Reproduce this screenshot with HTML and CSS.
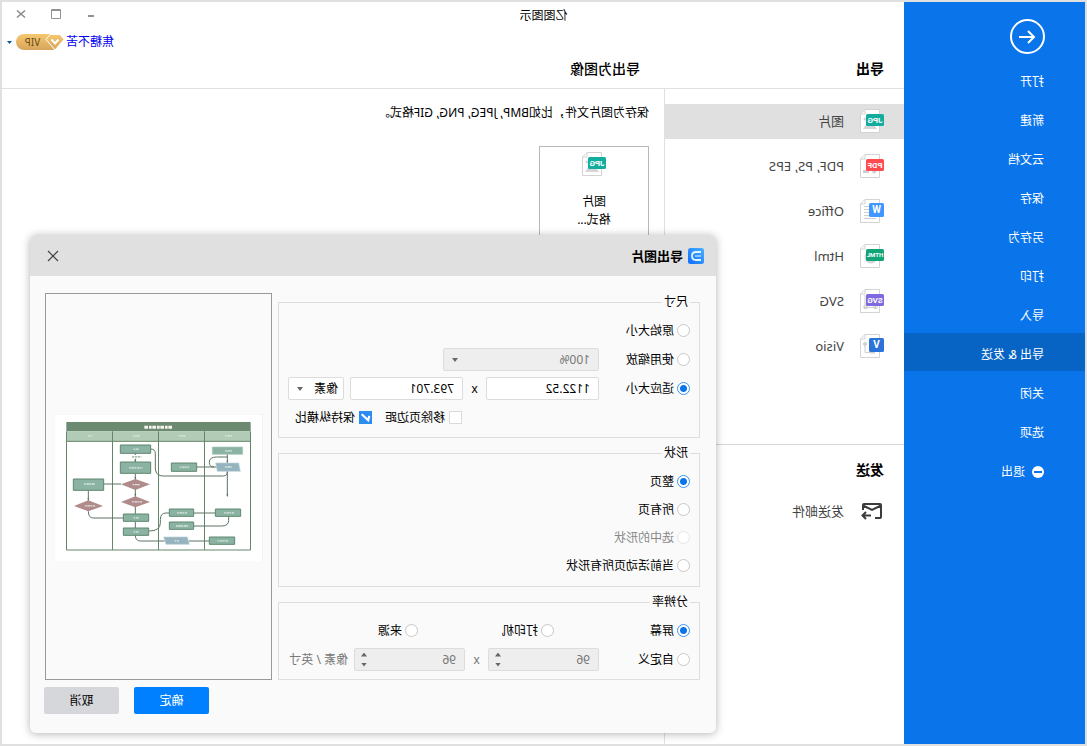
FILE: index.html
```html
<!DOCTYPE html>
<html lang="zh-CN">
<head>
<meta charset="utf-8">
<title>亿图图示</title>
<link rel="stylesheet" href="styles.css">
</head>
<body>
<svg class="defs" aria-hidden="true">
  <symbol id="doc" viewBox="0 0 24 24">
    <path d="M4.500.5H19L23.500 5V23.500H4.500Z" fill="#fff" stroke="#d3d3d3"/>
    <path d="M19 .5V5H23.500" fill="none" stroke="#d3d3d3"/>
  </symbol>
  <symbol id="photo" viewBox="0 0 24 24">
    <use href="#doc"/>
    <path d="M7 20L12 13L15 16L17 14L21 20Z" fill="#d6d6d6"/><circle cx="19" cy="10" r="1.500" fill="#d6d6d6"/>
    <rect y="5" width="18" height="12" rx="1.500" fill="#13ada0"/>
  </symbol>
</svg>
<div class="window">
  <nav class="sidebar">
    <button class="back" aria-label="返回">
      <svg width="35" height="35" viewBox="0 0 35 35" fill="none" stroke="#fff" stroke-width="2"><circle cx="17.500" cy="17.500" r="16.500"/><path d="M26 18H11M17 12L11 18L17 24"/></svg>
    </button>
    <a class="nav" href="#">打开</a>
    <a class="nav" href="#">新建</a>
    <a class="nav" href="#">云文档</a>
    <a class="nav" href="#">保存</a>
    <a class="nav" href="#">另存为</a>
    <a class="nav" href="#">打印</a>
    <a class="nav" href="#">导入</a>
    <a class="nav nav-active" href="#">导出 &amp; 发送</a>
    <a class="nav" href="#">关闭</a>
    <a class="nav" href="#">选项</a>
    <a class="nav" href="#"><svg width="12" height="12" viewBox="0 0 12 12"><circle cx="6" cy="6" r="6" fill="#fff"/><path d="M2 6H10" stroke="#0a75eb" stroke-width="2"/></svg>退出</a>
  </nav>

  <div class="workspace">
    <header class="top">
      <div class="titlebar">
        <h1 class="app-title">亿图图示</h1>
        <div class="controls">
          <button class="ctl" aria-label="最小化"><svg width="10" height="10"><rect x="2" y="6" width="6" height="2" fill="#929292"/></svg></button>
          <button class="ctl" aria-label="最大化"><svg width="10" height="10"><path d="M.5 .5H9.500V9.500H.5ZM1 1.500H9" fill="none" stroke="#929292"/></svg></button>
          <button class="ctl" aria-label="关闭窗口"><svg width="10" height="10"><path d="M1 1.500L9 8.500M9 1.500L1 8.500" stroke="#888" stroke-width="1.500"/></svg></button>
        </div>
      </div>
      <div class="account">
        <a class="user" href="#">焦糖不苦</a>
        <svg class="vip" width="48" height="16" viewBox="0 0 48 16">
          <defs><linearGradient id="gold" x2="0" y2="1"><stop stop-color="#f5c86e"/><stop offset="1" stop-color="#d7a55d"/></linearGradient></defs>
          <path d="M10 0H40A8 8 0 0 1 40 16H10Z" fill="url(#gold)"/>
          <path d="M4 .5H14L18 5.500L9 16L0 5.500Z" fill="url(#gold)" stroke="#fff"/>
          <path d="M5.500 5.500L9 9.500L12.500 5.500" fill="none" stroke="#fff" stroke-width="2"/>
          <text x="31.500" y="12" class="vip-text">VIP</text>
        </svg>
        <svg width="5" height="3"><path d="M0 0H5L2.500 3Z" fill="#0b55a8"/></svg>
      </div>
      <div class="headings">
        <h2 class="heading heading-nav">导出</h2>
        <h2 class="heading heading-page">导出为图像</h2>
      </div>
    </header>

    <div class="columns">
      <section class="formats">
        <ul class="list">
          <li class="format format-active"><svg class="icon" viewBox="0 0 24 24"><use href="#photo"/><text x="9" y="14" class="tag">JPG</text></svg>图片</li>
          <li class="format"><svg class="icon" viewBox="0 0 24 24"><use href="#doc"/><path d="M7 15L11 19M15 17.500H21" stroke="#cfcfcf" stroke-width="3"/><rect y="5" width="18" height="12" rx="1.500" fill="#ff4b50"/><text x="9" y="14" class="tag">PDF</text></svg>PDF, PS, EPS</li>
          <li class="format"><svg class="icon" viewBox="0 0 24 24"><use href="#doc"/><path d="M10 7.500H20M10 10.500H20M10 13.500H20M10 16.500H20M8 19.500H20" stroke="#cfcfcf"/><rect y="4" width="15" height="14" rx="1.500" fill="#3f97ff"/><text x="7.500" y="14" class="tag tag-big">W</text></svg>Office</li>
          <li class="format"><svg class="icon" viewBox="0 0 24 24"><use href="#doc"/><circle cx="13" cy="13" r="6.500" fill="#d6d6d6"/><rect y="5" width="18" height="12" rx="1.500" fill="#10a478"/><text x="9" y="13" class="tag tag-small">HTML</text></svg>Html</li>
          <li class="format"><svg class="icon" viewBox="0 0 24 24"><use href="#doc"/><path d="M8.500 6V19M19 6V19M8 18.500H20M7 16.500H10V19.500H7ZM17 16.500H20V19.500H17Z" fill="none" stroke="#cfcfcf"/><rect y="5" width="18" height="12" rx="1.500" fill="#8069de"/><text x="9" y="14" class="tag">SVG</text></svg>SVG</li>
          <li class="format"><svg class="icon" viewBox="0 0 24 24"><use href="#doc"/><path d="M19 10V18.500H9" fill="none" stroke="#cfcfcf"/><path d="M16.500 10L19 7.500L21.500 10L19 12.500ZM9 16.500H14V19.500H9Z" fill="#cfcfcf"/><rect y="4" width="15" height="14" rx="1.500" fill="#2b73d8"/><text x="7.500" y="14" class="tag tag-big">V</text></svg>Visio</li>
        </ul>
        <div class="send">
          <h2 class="heading">发送</h2>
          <a class="mail" href="#"><svg width="24" height="18" viewBox="0 0 24 18" fill="none" stroke="#3c3c3c" stroke-width="2"><path d="M9 16H4Q3 16 3 15V3Q3 2 4 2H20Q21 2 21 3V8M3 3.500L12 8L21 3.500"/><path d="M13 13.500H21M18 10L21.500 13.500L18 17"/></svg>发送邮件</a>
        </div>
      </section>
      <main class="page">
        <p class="desc">保存为图片文件，比如BMP, JPEG, PNG, GIF格式。</p>
        <button class="card"><svg class="icon" viewBox="0 0 24 24"><use href="#photo"/><text x="9" y="14" class="tag">JPG</text></svg><span>图片<br>格式...</span></button>
      </main>
    </div>
  </div>

  <div class="dialog" role="dialog" aria-labelledby="dlg-title">
    <div class="dlg-head">
      <svg width="16" height="16" viewBox="0 0 16 16"><defs><linearGradient id="blue" x1="0" y1="0" x2="1" y2="1"><stop stop-color="#49b2ff"/><stop offset="1" stop-color="#0f6bff"/></linearGradient></defs><rect width="16" height="16" rx="2.500" fill="url(#blue)"/><path d="M3 4H8Q12 4 12 8T8 12H3" fill="none" stroke="#e4f4ff" stroke-width="1.800"/><path d="M3 8H9" stroke="#a9d6ff" stroke-width="1.500"/></svg>
      <h2 class="dlg-title" id="dlg-title">导出图片</h2>
      <button class="dlg-close" aria-label="关闭"><svg width="12" height="12"><path d="M1 1L11 11M11 1L1 11" stroke="#444" stroke-width="1.200"/></svg></button>
    </div>
    <div class="dlg-body">
      <form class="groups">
        <fieldset class="group">
          <legend>尺寸</legend>
          <div class="row"><label class="opt"><input type="radio" name="size">原始大小</label></div>
          <div class="row">
            <label class="opt opt-lead"><input type="radio" name="size">使用缩放</label>
            <select class="field zoom" aria-label="缩放" disabled><option>100%</option></select>
          </div>
          <div class="row">
            <label class="opt opt-lead"><input type="radio" name="size" checked>适应大小</label>
            <input class="field num" aria-label="宽度" value="1122.52">
            <span class="times">x</span>
            <input class="field num" aria-label="高度" value="793.701">
            <select class="field unit" aria-label="单位"><option>像素</option></select>
          </div>
          <div class="row row-checks">
            <label class="opt opt-check"><input type="checkbox">移除页边距</label>
            <label class="opt"><input type="checkbox" checked>保持纵横比</label>
          </div>
        </fieldset>
        <fieldset class="group group-shape">
          <legend>形状</legend>
          <div class="row"><label class="opt"><input type="radio" name="shape" checked>整页</label></div>
          <div class="row"><label class="opt"><input type="radio" name="shape">所有页</label></div>
          <div class="row"><label class="opt opt-off"><input type="radio" name="shape" disabled>选中的形状</label></div>
          <div class="row"><label class="opt"><input type="radio" name="shape">当前活动页所有形状</label></div>
        </fieldset>
        <fieldset class="group">
          <legend>分辨率</legend>
          <div class="row">
            <label class="opt opt-third"><input type="radio" name="dpi" checked>屏幕</label>
            <label class="opt opt-third"><input type="radio" name="dpi">打印机</label>
            <label class="opt"><input type="radio" name="dpi">来源</label>
          </div>
          <div class="row row-off">
            <label class="opt opt-lead"><input type="radio" name="dpi">自定义</label>
            <span class="field spin"><input aria-label="水平分辨率" value="96" disabled><span class="steps"><button type="button" class="up" aria-label="增加" disabled></button><button type="button" class="down" aria-label="减少" disabled></button></span></span>
            <span class="times">x</span>
            <span class="field spin"><input aria-label="垂直分辨率" value="96" disabled><span class="steps"><button type="button" class="up" aria-label="增加" disabled></button><button type="button" class="down" aria-label="减少" disabled></button></span></span>
            <span class="per">像素 / 英寸</span>
          </div>
        </fieldset>
      </form>
      <div class="preview">
        <svg class="chart" viewBox="75 43 624 441" role="img" aria-label="流程图预览">
          <g transform="translate(774 0) scale(-1 1)">
            <rect x="75" y="43" width="624" height="441" fill="#fff"/>
            <path d="M75 43H698V484" fill="none" stroke="#f0f0f0" stroke-width="3"/>
            <rect x="109" y="67" width="553" height="28" fill="#6c8a70"/>
            <rect x="109" y="95" width="553" height="30" fill="#b2cbb6"/>
            <path d="M109.500 95V451H661.500V95M109 125H662M247.500 95V451M385.500 95V451M523.500 95V451" fill="none" stroke="#66866a" stroke-width="3"/>
            <g fill="none" stroke="#5d7563" stroke-width="3">
              <path d="M362 148Q376 148 376 162V208Q378 229 400 229H580Q592 229 592 215M316 161V188M316 221V343M273 253H221M175 272V335Q175 355 190 355H280M316 366V385M357 394Q391 394 391 370V360Q391 340 408 340H418M316 407Q316 424 332 424H404M476 424H538M491 340H556M491 379H575Q596 379 596 362V350M592 163V290M592 172H560Q538 172 538 188Q538 202 552 202M500 202H560"/>
            </g>
            <path d="M313 180h6l-3 7zM313 232h6l-3 7zM313 283h6l-3 7zM589 284h6l-3 7zM589 183h6l-3 7zM172 296h6l-3 7z" fill="#5d7563"/>
            <g fill="#8bb3a3" stroke="#61866e" stroke-width="3">
              <path d="M271 136H362V161H271ZM271 187H362V221H271ZM130 238H221V272H130ZM424 190H500V215H424ZM280 343H356V365H280ZM280 385H356V407H280ZM418 328H491V350H418ZM418 367H491V389H418ZM556 328H632V350H556ZM538 412H614V434H538Z"/>
            </g>
            <path d="M547 142H638V164H547Z" fill="#8bb3a3" stroke="#a9c8bc" stroke-width="2"/>
            <path d="M557 190H626L631 215H562ZM401 412H472L478 434H408Z" fill="#96b4bf" stroke="#bdd0d6" stroke-width="2"/>
            <path d="M273 254L316 238L360 254L316 271ZM273 307L316 290L360 307L316 323ZM132 319L175 302L219 319L175 335Z" fill="#b18b8c"/>
            <rect x="304" y="166" width="30" height="11" fill="#fff"/>
            <path d="M306 171.500H334" stroke="#91a58f" stroke-width="4" stroke-dasharray="7 2"/>
            <path d="M343 82.500H426" stroke="#f8f5ef" stroke-width="9" stroke-dasharray="11 3 8 2"/>
            <g stroke="#dbe8dd" stroke-width="4" stroke-dasharray="5 2 8 1">
              <path d="M174 108.500H187M309 108.500H330M446 108.500H468M585 108.500H606M311 148.500H326M297 204.500H338M162 253H195M449 202.500H477M311 354.500H326M311 396.500H326M441 339.500H471M438 379H474M582 339.500H612M563 423.500H595M585 153.500H606M585 202H605M434 423.500H447M308 255H329M306 306.500H336M165 318.500H195"/>
            </g>
          </g>
        </svg>
      </div>
    </div>
    <div class="dlg-foot">
      <button class="btn btn-primary">确定</button>
      <button class="btn">取消</button>
    </div>
  </div>
</div>
</body>
</html>
```
FILE: styles.css
```css
* { box-sizing: border-box; }

body {
  margin: 0;
  font: 12px/18px "Noto Sans", "Noto Sans CJK SC", sans-serif;
  font-kerning: none;
  color: #000;
}

button, input, select { font: inherit; color: inherit; margin: 0; }
button { border: 0; padding: 0; background: none; }
a { color: inherit; text-decoration: none; }
h1, h2, p, ul { margin: 0; padding: 0; }
svg { flex: none; display: block; }
.defs { position: absolute; width: 0; height: 0; }

/* The whole window is shown as a mirror image. */
.window {
  position: relative;
  display: flex;
  min-height: 100vh;
  border: 2px solid #e0e0e0;
  background: #fff;
  transform: scaleX(-1);
}

.sidebar {
  flex: none;
  width: 181px;
  display: flex;
  flex-direction: column;
  gap: 1px;
  background: #0a75eb;
  color: #fff;
  padding-top: 17px;
}
.back { align-self: flex-start; margin: 0 0 5px 40px; }
.nav {
  display: flex;
  align-items: center;
  gap: 7px;
  height: 38px;
  padding: 6px 0 0 41px;
}
.nav-active { background: #0764c5; }

.workspace { flex: 1; min-width: 0; display: flex; flex-direction: column; }
.top { border-bottom: 1px solid #e0e0e0; padding-bottom: 4px; }
.titlebar { display: flex; align-items: center; height: 28px; }
.app-title { flex: 1; text-align: center; font-size: 12px; font-weight: 400; }
.controls {
  width: 181px;
  display: flex;
  justify-content: flex-end;
  gap: 25px;
  padding: 0 14px 4px 0;
}
.account {
  display: flex;
  align-items: center;
  justify-content: flex-end;
  gap: 4px;
  height: 24px;
  padding-right: 5px;
}
.user { color: #0000f0; margin-right: -2px; }
.vip-text { font: 10px "Noto Sans", sans-serif; fill: #6b4713; text-anchor: middle; }
.headings { display: flex; align-items: center; height: 30px; }
.heading { font-size: 14px; font-weight: 700; }
.heading-nav { width: 264px; padding-left: 20px; }
.heading-page { font-weight: 500; }

.columns { flex: 1; display: flex; }
.formats { flex: none; width: 240px; border-right: 1px solid #e0e0e0; color: #444; }
.list { list-style: none; display: flex; flex-direction: column; gap: 10px; padding: 15px 0 80px; }
.format {
  display: flex;
  align-items: center;
  gap: 16px;
  height: 35px;
  padding: 0 0 1px 20px;
  font-size: 13px;
}
.format-active { background: #e0e0e0; }
.icon { width: 24px; height: 24px; }
.tag { font: 700 8px Roboto, sans-serif; fill: #fff; text-anchor: middle; }
.tag-small { font-size: 6px; }
.tag-big { font-size: 10px; }
.send { border-top: 1px solid #d6d6d6; padding: 16px 20px; color: #000; }
.mail { display: flex; align-items: center; gap: 16px; margin-top: 23px; font-size: 13px; color: #444; }

.page { flex: 1; padding: 15px; }
.card {
  display: flex;
  flex-direction: column;
  align-items: center;
  gap: 17px;
  width: 110px;
  height: 110px;
  margin-top: 24px;
  padding-top: 5px;
  border: 1px solid #b8b8b8;
}

.dialog {
  position: absolute;
  top: 233px;
  right: 28px;
  width: 686px;
  border-radius: 6px;
  background: #fafafa;
  box-shadow: 0 1px 8px rgba(0, 0, 0, 0.3);
}
.dlg-head {
  display: flex;
  align-items: center;
  gap: 5px;
  height: 41px;
  padding: 0 17px 0 12px;
  border-radius: 6px 6px 0 0;
  background: #e0e0e0;
}
.dlg-title { flex: 1; font-size: 13px; font-weight: 700; }
.dlg-body { display: flex; gap: 6px; padding: 17px 15px 0 16px; }
.groups { flex: 1; display: flex; flex-direction: column; gap: 6px; }
.group {
  display: flex;
  flex-direction: column;
  gap: 6px;
  min-width: 0;
  margin: 0;
  padding: 8px 9px;
  border: 1px solid #dedede;
}
.group-shape { gap: 5px; padding-bottom: 9px; }
legend { padding: 0 2px; }
.row { display: flex; align-items: center; height: 23px; }
.row-checks { padding-left: 228px; }
.row-off { color: #777; }
.opt { display: flex; align-items: center; gap: 3px; color: #000; }
.opt-lead { width: 91px; }
.opt-third { width: 136px; }
.row-checks .opt { gap: 4px; }
.opt-check { width: 90px; }
.opt-off { color: #888; }

input[type="radio"], input[type="checkbox"] {
  appearance: none;
  width: 13px;
  height: 13px;
  border: 1px solid #c8c8c8;
  background: #fff;
}
input[type="radio"] { border-radius: 50%; }
input[type="radio"]:checked {
  border-color: #3f93ee;
  background: radial-gradient(circle, #0a75eb 3px, #fff 4px);
}
input[type="radio"]:disabled { border-color: #e6e6e6; }
input[type="checkbox"] { border-color: #dadada; }
input[type="checkbox"]:checked {
  border: 0;
  background: #2d8cf0 url("data:image/svg+xml,%3Csvg xmlns='http://www.w3.org/2000/svg' viewBox='0 0 12 12'%3E%3Cpath d='M2.500 4.500L3.500 8.500L9.500 3' fill='none' stroke='white' stroke-width='2'/%3E%3C/svg%3E");
}

.field {
  height: 23px;
  border: 1px solid #dcdcdc;
  border-radius: 2px;
  background-color: #fff;
  padding: 0 8px;
}
.field:disabled, .spin { background-color: #eee; color: #777; opacity: 1; }
.num { width: 113px; }
select.field {
  appearance: none;
  background-image: url("data:image/svg+xml,%3Csvg xmlns='http://www.w3.org/2000/svg' width='6' height='4'%3E%3Cpath d='M0 0H6L3 4Z' fill='%23666'/%3E%3C/svg%3E");
  background-repeat: no-repeat;
  background-position: right 8px center;
}
.zoom { width: 156px; }
select.unit { width: 56px; margin-left: 6px; padding: 0 5px; }
.times { width: 23px; text-align: center; }
.spin { display: flex; align-items: center; width: 111px; padding-right: 6px; }
.spin input { flex: 1; min-width: 0; border: 0; padding: 0; background: none; }
.steps { display: flex; flex-direction: column; gap: 6px; }
.up, .down { width: 6px; height: 4px; background: #666; }
.up { clip-path: polygon(50% 0, 100% 100%, 0 100%); }
.down { clip-path: polygon(0 0, 100% 0, 50% 100%); }
.per { margin-left: 6px; }

.preview {
  width: 227px;
  display: flex;
  align-items: center;
  justify-content: center;
  padding: 2px 2px 0 0;
  border: 1px solid #999;
}
.chart { width: 208px; height: 147px; }

.dlg-foot { display: flex; justify-content: flex-end; gap: 15px; padding: 7px 14px 19px; }
.btn { width: 75px; height: 27px; border-radius: 2px; background: #d5d7db; }
.btn-primary { background: #007fff; color: #fff; }
```
